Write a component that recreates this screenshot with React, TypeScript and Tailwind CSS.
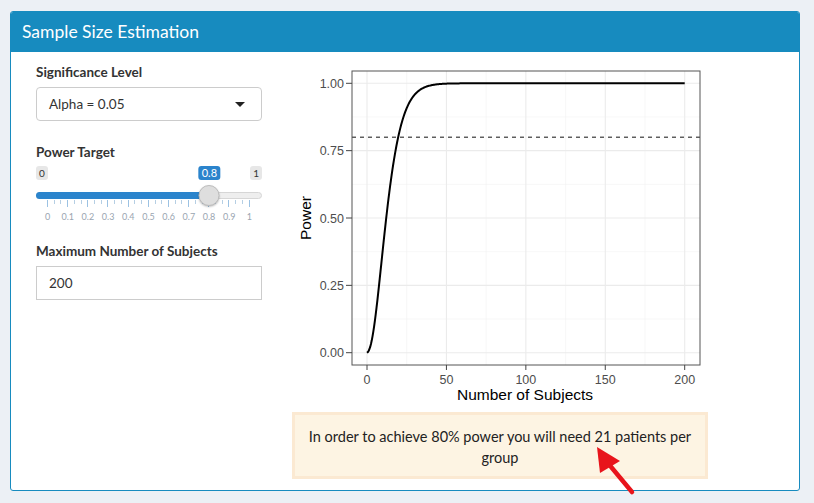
import React from 'react';

const PLOT_W = 416;
const PLOT_H = 350;

// plot geometry, in svg pixels
const panel = { left: 60, right: 408, top: 11, bottom: 305 };
const sx = (n: number) => 75 + n * 1.5885;
const sy = (p: number) => 292.7 - p * 269.4;

function erf(x: number) {
  const s = x < 0 ? -1 : 1;
  const a = Math.abs(x);
  const t = 1 / (1 + 0.3275911 * a);
  const y =
    1 -
    ((((1.061405429 * t - 1.453152027) * t + 1.421413741) * t - 0.284496736) * t + 0.254829592) *
      t *
      Math.exp(-a * a);
  return s * y;
}

const pnorm = (x: number) => 0.5 * (1 + erf(x / Math.SQRT2));

function powerAt(n: number) {
  return pnorm(1.454 * Math.pow(n, 0.4) - 3.942);
}

const curve = (() => {
  const pts: string[] = [];
  for (let i = 0; i <= 400; i++) {
    const n = i / 2;
    pts.push(`${sx(n).toFixed(2)},${sy(powerAt(n)).toFixed(2)}`);
  }
  return pts.join(' ');
})();

function PowerPlot() {
  const xMajor = [0, 50, 100, 150, 200];
  const xMinor = [25, 75, 125, 175];
  const yMajor = [0, 0.25, 0.5, 0.75, 1];
  const yMinor = [0.125, 0.375, 0.625, 0.875];
  const font = '"Liberation Sans", Arial, sans-serif';

  return (
    <svg width={PLOT_W} height={PLOT_H} viewBox={`0 0 ${PLOT_W} ${PLOT_H}`} className="block">
      <rect x={panel.left} y={panel.top} width={panel.right - panel.left} height={panel.bottom - panel.top} fill="#fff" />
      {/* grid */}
      {xMinor.map((n) => (
        <line key={`xm${n}`} x1={sx(n)} x2={sx(n)} y1={panel.top} y2={panel.bottom} stroke="#f2f2f2" strokeWidth={0.6} />
      ))}
      {yMinor.map((p) => (
        <line key={`ym${p}`} x1={panel.left} x2={panel.right} y1={sy(p)} y2={sy(p)} stroke="#f2f2f2" strokeWidth={0.6} />
      ))}
      {xMajor.map((n) => (
        <line key={`xM${n}`} x1={sx(n)} x2={sx(n)} y1={panel.top} y2={panel.bottom} stroke="#ebebeb" strokeWidth={1.1} />
      ))}
      {yMajor.map((p) => (
        <line key={`yM${p}`} x1={panel.left} x2={panel.right} y1={sy(p)} y2={sy(p)} stroke="#ebebeb" strokeWidth={1.1} />
      ))}

      {/* target line */}
      <line x1={panel.left} x2={panel.right} y1={sy(0.8)} y2={sy(0.8)} stroke="#111" strokeWidth={1} strokeDasharray="4 4" />

      {/* power curve */}
      <polyline points={curve} fill="none" stroke="#000" strokeWidth={2} strokeLinejoin="round" />

      {/* panel border */}
      <rect
        x={panel.left}
        y={panel.top}
        width={panel.right - panel.left}
        height={panel.bottom - panel.top}
        fill="none"
        stroke="#555"
        strokeWidth={1}
      />

      {/* y axis */}
      {yMajor.map((p) => (
        <g key={`yt${p}`}>
          <line x1={panel.left - 6} x2={panel.left} y1={sy(p)} y2={sy(p)} stroke="#444" strokeWidth={1} />
          <text x={panel.left - 8} y={sy(p) + 4.5} textAnchor="end" fontSize={12.5} fill="#4d4d4d" fontFamily={font}>
            {p.toFixed(2)}
          </text>
        </g>
      ))}
      {/* x axis */}
      {xMajor.map((n) => (
        <g key={`xt${n}`}>
          <line x1={sx(n)} x2={sx(n)} y1={panel.bottom} y2={panel.bottom + 5} stroke="#444" strokeWidth={1} />
          <text x={sx(n)} y={panel.bottom + 19} textAnchor="middle" fontSize={12.5} fill="#4d4d4d" fontFamily={font}>
            {n}
          </text>
        </g>
      ))}

      <text x={233} y={340} textAnchor="middle" fontSize={15.5} fill="#000" fontFamily={font}>
        Number of Subjects
      </text>
      <text
        x={0}
        y={0}
        transform="translate(19 158) rotate(-90)"
        textAnchor="middle"
        fontSize={15.5}
        fill="#000"
        fontFamily={font}
      >
        Power
      </text>
    </svg>
  );
}

function PowerSlider({ value }: { value: number }) {
  // grid runs from 11px to 214px inside the 226px wide slider
  const handleX = 11 + 203 * value;
  const ticks = Array.from({ length: 31 }, (_, i) => i % 3 === 0);
  const labels = Array.from({ length: 11 }, (_, i) => (i === 0 ? '0' : i === 10 ? '1' : (i / 10).toFixed(1)));

  return (
    <div className="w-[226px] pb-[5px] pt-[4px]">
      {/* min / value / max */}
      <div className="relative flex h-[14px] justify-between text-[10px] leading-[14px] text-[#333]">
        <span className="rounded-[3px] bg-[#e7e7e7] px-[3px]">0</span>
        <span
          className="absolute top-0 -translate-x-1/2 rounded-[3px] bg-[#2b84cc] px-[3px] text-[11px] text-white"
          style={{ left: handleX }}
        >
          {value}
        </span>
        <span className="rounded-[3px] bg-[#e7e7e7] px-[3px]">1</span>
      </div>

      {/* track */}
      <div className="relative mt-[12px] h-[7px] rounded-full border border-[#d6d6d6] bg-[#eeeeee]">
        <div className="-ml-px -mt-px h-[7px] rounded-l-full bg-[#2b84cc]" style={{ width: handleX }} />
        <div
          className="absolute top-[-8px] h-[21px] w-[21px] -translate-x-1/2 rounded-full border border-[#bdbdbd] bg-[#dedede] shadow-[0_1px_2px_rgba(0,0,0,0.25)]"
          style={{ left: handleX - 1 }}
        />
      </div>

      {/* grid */}
      <div className="mt-[1px] flex items-start justify-between pl-[11px] pr-[12px]">
        {ticks.map((major, i) => (
          <div key={i} className={major ? 'h-[7px] w-px bg-[#9cc2e3]' : 'h-[4px] w-px bg-[#b6cfe4]'} />
        ))}
      </div>
      <div className="mt-[4px] flex justify-between pl-[11px] pr-[12px]">
        {labels.map((l) => (
          <div key={l} className="flex w-px justify-center">
            <span className="text-[9px] leading-[12px] text-[#9aa5b1]">{l}</span>
          </div>
        ))}
      </div>
    </div>
  );
}

export default function App() {
  return (
    <div
      className="relative min-h-[503px] bg-[#ecf0f5] pl-[10px] pt-[11px]"
      style={{ fontFamily: 'Lato, "Open Sans", sans-serif' }}
    >
      <div className="h-[480px] w-[790px] overflow-hidden rounded-[3px] border border-[#178bbf] bg-white">
        {/* Header */}
        <div className="flex h-[40px] items-center bg-[#178bbf] px-[11px]">
          <h3 className="text-[17.5px] font-normal text-white">Sample Size Estimation</h3>
        </div>

        {/* Body */}
        <div className="flex pl-[25px]">
          {/* Inputs */}
          <div className="w-[226px] pt-[10px]">
            <label className="block text-[13.5px] font-bold leading-5 text-[#333]">Significance Level</label>
            <div className="mt-[5px] flex h-[34px] items-center justify-between rounded-[4px] border border-[#cccccc] bg-white pl-[12px] pr-[16px]">
              <span className="text-[13.5px] text-[#333]">Alpha = 0.05</span>
              <span className="h-0 w-0 border-x-[5px] border-t-[5px] border-x-transparent border-t-[#222]" />
            </div>

            <label className="mt-[21px] block text-[13.5px] font-bold leading-5 text-[#333]">Power Target</label>
            <PowerSlider value={0.8} />

            <label className="mt-[13px] block text-[13.5px] font-bold leading-5 text-[#333]">
              Maximum Number of Subjects
            </label>
            <div className="mt-[5px] flex h-[34px] items-center border border-[#cccccc] bg-white pl-[12px]">
              <span className="text-[13.5px] text-[#333]">200</span>
            </div>
          </div>

          {/* Output */}
          <div className="ml-[30px] w-[416px] pt-[8px]">
            <PowerPlot />
            <div className="mt-[2px] h-[67px] border-[3px] border-[#fbe9d2] bg-[#fdf4e3] px-[9px] pt-[11px] text-center text-[14.5px] leading-[21px] text-[#222]">
              In order to achieve 80% power you will need 21 patients per group
            </div>
          </div>
        </div>
      </div>

      {/* annotation arrow */}
      <svg className="absolute left-[590px] top-[440px]" width={50} height={60} viewBox="0 0 50 60">
        <line x1={42} y1={52} x2={17} y2={22} stroke="#e8141b" strokeWidth={4.5} strokeLinecap="round" />
        <polygon points="7,7 10,33 30,21" fill="#e8141b" />
      </svg>
    </div>
  );
}
